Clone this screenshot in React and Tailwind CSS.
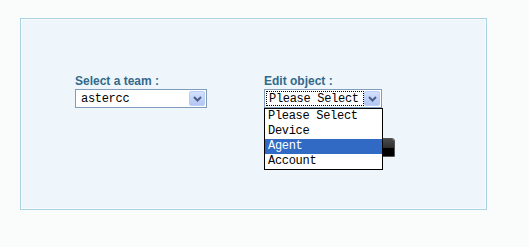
import React from 'react';

const labelFont = { fontFamily: '"Liberation Sans", Arial, sans-serif' };
const monoFont = { fontFamily: '"Liberation Mono", "DejaVu Sans Mono", monospace' };

const options = ['Please Select', 'Device', 'Agent', 'Account'];

const ArrowButton = () => (
  <div className="flex h-full w-[16px] items-center justify-center rounded-[2px] border border-[#bccdf5] bg-gradient-to-b from-[#d3e0fd] to-[#b2c6f4]">
    <svg width="9" height="6" viewBox="0 0 9 6">
      <path d="M1 1 L4.5 4.5 L8 1" fill="none" stroke="#4b5f86" strokeWidth="2" />
    </svg>
  </div>
);

const FakeSelect = ({ value, width, focused }) => (
  <div
    className="flex h-[19px] items-stretch border border-[#7f9db9] bg-white p-px"
    style={{ width }}
  >
    <div
      className={`flex flex-1 items-center text-[12px] tracking-[-0.3px] text-black ${
        focused ? 'border border-dotted border-black pl-[2px]' : 'pl-[4px]'
      }`}
      style={monoFont}
    >
      {value}
    </div>
    <ArrowButton />
  </div>
);

const Field = ({ label, children }) => (
  <div className="relative flex flex-col">
    <div
      className="h-[16px] text-[12px] font-bold leading-[16px] text-[#33698a]"
      style={labelFont}
    >
      {label}
    </div>
    {children}
  </div>
);

export default function App() {
  return (
    <div className="h-[247px] w-[529px] bg-[#fafbfb] pl-[20px] pt-[18px]">
      <div className="h-[192px] w-[467px] border border-[#a9d3e3] bg-[#f9fcfe] p-px">
        <div className="flex h-full gap-[57px] bg-[#eef6fc] pl-[53px] pt-[53px]">
          <Field label="Select a team :">
            <FakeSelect value="astercc" width={132} />
          </Field>

          <Field label="Edit object :">
            <FakeSelect value="Please Select" width={118} focused />

            {/* dark button partly hidden under the open list */}
            <div className="absolute left-[88px] top-[65px] flex h-[19px] w-[43px] flex-col overflow-hidden rounded-tr-[3px] border border-[#555]">
              <div className="h-1/2 bg-gradient-to-b from-[#4a4a4a] to-[#2e2e2e]" />
              <div className="h-1/2 bg-black" />
            </div>

            {/* open dropdown list */}
            <div className="absolute left-0 top-[35px] w-[119px] border border-black bg-white" style={monoFont}>
              {options.map((opt) => (
                <div
                  key={opt}
                  className={`h-[15px] pl-[3px] text-[12px] leading-[15px] tracking-[-0.3px] ${
                    opt === 'Agent' ? 'bg-[#316ac5] text-white' : 'text-black'
                  }`}
                >
                  {opt}
                </div>
              ))}
            </div>
          </Field>
        </div>
      </div>
    </div>
  );
}
